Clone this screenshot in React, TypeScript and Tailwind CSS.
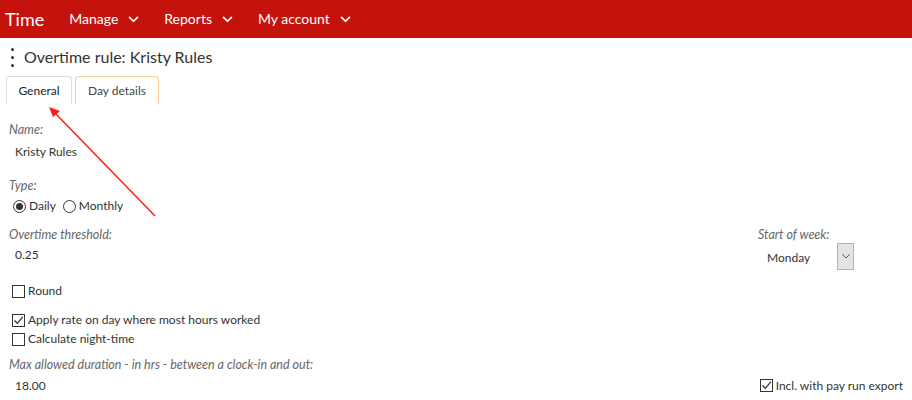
import React from "react";

const navItems = ["Manage", "Reports", "My account"];

function Chevron({ className }: { className?: string }) {
  return (
    <svg viewBox="0 0 12 8" className={className} fill="none">
      <path d="M1.5 1.5 6 6l4.5-4.5" stroke="currentColor" strokeWidth="2" strokeLinecap="round" strokeLinejoin="round" />
    </svg>
  );
}

function Checkbox({ checked, label }: { checked?: boolean; label: string }) {
  return (
    <div className="flex items-center h-4 pl-[3px]">
      <span className="w-[13px] h-[13px] border border-[#333] bg-white flex items-center justify-center">
        {checked && (
          <svg viewBox="0 0 11 11" className="w-[11px] h-[11px]" fill="none">
            <path d="M1.5 5.5 4.3 8.3 9.8 1.8" stroke="#333" strokeWidth="1.3" />
          </svg>
        )}
      </span>
      <span className="ml-[3px]">{label}</span>
    </div>
  );
}

function Radio({ checked, label }: { checked?: boolean; label: string }) {
  return (
    <span className="flex items-center">
      <span className="w-[13px] h-[13px] rounded-full border border-[#333] flex items-center justify-center">
        {checked && <span className="w-[7px] h-[7px] rounded-full bg-[#333]" />}
      </span>
      <span className="ml-[3px]">{label}</span>
    </span>
  );
}

export default function App() {
  return (
    <div className="relative w-[912px] h-[400px] overflow-hidden bg-white text-[#333] text-[12px] leading-4 font-['Lato','Liberation_Sans',sans-serif]">
      {/* Header */}
      <div className="h-[38px] bg-[#c4120c] flex items-center text-white">
        <span className="ml-[5px] text-[18px] leading-none">Time</span>
        <div className="flex items-center ml-[25px] text-[14px]">
          {navItems.map((item) => (
            <div key={item} className="flex items-center gap-[10px] mr-[25px]">
              <span>{item}</span>
              <Chevron className="w-[11px] h-[7px]" />
            </div>
          ))}
        </div>
      </div>

      {/* Title */}
      <div className="flex items-center h-[24px] mt-[7px]">
        <div className="flex flex-col gap-[5px] ml-[11px] w-[3px]">
          <span className="w-[3px] h-[3px] rounded-full bg-[#333]" />
          <span className="w-[3px] h-[3px] rounded-full bg-[#333]" />
          <span className="w-[3px] h-[3px] rounded-full bg-[#333]" />
        </div>
        <h1 className="ml-[10px] text-[16px] text-[#333]">Overtime rule: Kristy Rules</h1>
      </div>

      {/* Tabs */}
      <div className="flex mt-[7px] ml-[6px] gap-[3px]">
        <div className="h-[28px] w-[66px] border border-b-0 border-[#dcdcdc] rounded-t-[4px] flex items-center justify-center text-[#222]">
          General
        </div>
        <div className="h-[28px] w-[84px] border border-b-0 border-[#f6cf9a] rounded-t-[4px] flex items-center justify-center text-[#444]">
          Day details
        </div>
      </div>

      {/* Form */}
      <div className="px-[9px]">
        <div className="mt-[18px] italic text-[#666] text-[12.5px]">Name:</div>
        <div className="mt-[6px] pl-[6px]">Kristy Rules</div>

        <div className="mt-[18px] italic text-[#666] text-[12.5px]">Type:</div>
        <div className="mt-[4px] flex items-center gap-[7px] pl-[4px]">
          <Radio checked label="Daily" />
          <Radio label="Monthly" />
        </div>

        <div className="mt-[13px] flex justify-between pr-[49px]">
          <div>
            <div className="italic text-[#666] text-[12.5px]">Overtime threshold:</div>
            <div className="mt-[4px] pl-[6px]">0.25</div>
          </div>
          <div className="w-[96px]">
            <div className="italic text-[#666] text-[12.5px]">Start of week:</div>
            <div className="flex items-center justify-between">
              <span className="pl-[9px] mt-[3px]">Monday</span>
              <span className="w-[17px] h-[27px] bg-[#e4e4e4] border border-[#b4b4b4] flex items-center justify-center text-[#555]">
                <svg viewBox="0 0 8 5" className="w-[8px] h-[5px]" fill="none">
                  <path d="M.5.5 4 4 7.5.5" stroke="currentColor" strokeWidth="1" />
                </svg>
              </span>
            </div>
          </div>
        </div>

        <div className="mt-[13px]">
          <Checkbox label="Round" />
        </div>
        <div className="mt-[13px] flex flex-col gap-[3px]">
          <Checkbox checked label="Apply rate on day where most hours worked" />
          <Checkbox label="Calculate night-time" />
        </div>

        <div className="mt-[10px] italic text-[#666] text-[12.5px]">Max allowed duration - in hrs - between a clock-in and out:</div>
        <div className="mt-[4px] flex items-center justify-between">
          <span className="pl-[6px] mt-[1px]">18.00</span>
          <Checkbox checked label="Incl. with pay run export" />
        </div>
      </div>

      {/* Annotation arrow */}
      <svg className="absolute left-0 top-0 pointer-events-none" width="912" height="400">
        <line x1="155" y1="216" x2="55" y2="113" stroke="#ff1a1a" strokeWidth="1.5" />
        <polygon points="49,107 60,111 53,117" fill="#ff1a1a" />
      </svg>
    </div>
  );
}
